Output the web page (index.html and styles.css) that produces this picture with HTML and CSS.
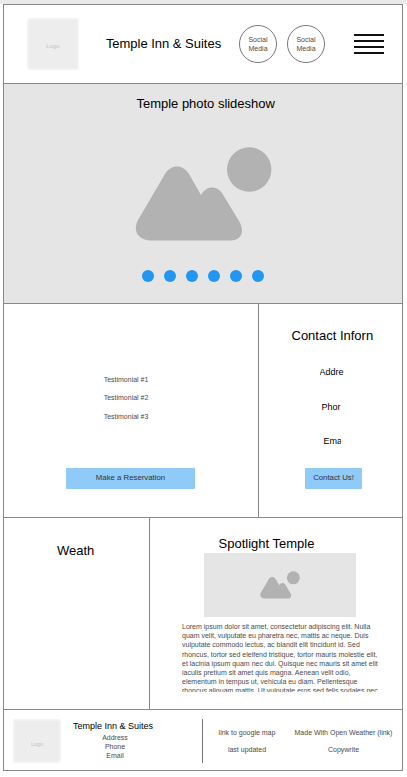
FILE: index.html
```html
<!DOCTYPE html>
<html lang="en">
<head>
<meta charset="utf-8">
<title>Temple Inn &amp; Suites</title>
<link rel="stylesheet" href="styles.css">
</head>
<body>
<svg class="defs" aria-hidden="true">
  <symbol id="photo" viewBox="0 0 137 94">
    <circle cx="114.200" cy="22.500" r="22.200"/>
    <path d="M30 27 C36 17 48 17 54 27 L66 48 C71 39 81 38 87 46 L104 74 C110 84 107 93 96 93.500 H16 C4 93 -3 85 3 73 Z"/>
  </symbol>
</svg>
<div class="page">
  <header class="header">
    <div class="logo">Logo</div>
    <h1 class="title brand">Temple Inn &amp; Suites</h1>
    <a class="social">Social<br>Media</a>
    <a class="social">Social<br>Media</a>
    <div class="menu"><i></i><i></i><i></i><i></i></div>
  </header>
  <section class="hero">
    <h2 class="title">Temple photo slideshow</h2>
    <svg class="hero-photo"><use href="#photo"/></svg>
    <div class="dots"><i></i><i></i><i></i><i></i><i></i><i></i></div>
  </section>
  <div class="row middle">
    <section class="testimonials">
      <p>Testimonial #1</p>
      <p>Testimonial #2</p>
      <p>Testimonial #3</p>
      <a class="button reserve">Make a Reservation</a>
    </section>
    <section class="contact">
      <h2 class="title contact-title">Contact Inforn</h2>
      <p class="address">Addre</p>
      <p class="phone">Phor</p>
      <p class="email">Ema</p>
      <a class="button contact-button">Contact Us!</a>
    </section>
  </div>
  <div class="row lower">
    <section class="weather"><h2 class="title">Weath</h2></section>
    <section class="spotlight">
      <h2 class="title">Spotlight Temple</h2>
      <div class="spot-image"><svg class="spot-photo"><use href="#photo"/></svg></div>
      <p class="lorem">Lorem ipsum dolor sit amet, consectetur adipiscing elit. Nulla<br>quam velit, vulputate eu pharetra nec, mattis ac neque. Duis<br>vulputate commodo lectus, ac blandit elit tincidunt id. Sed<br>rhoncus, tortor sed eleifend tristique, tortor mauris molestie elit,<br>et lacinia ipsum quam nec dui. Quisque nec mauris sit amet elit<br>iaculis pretium sit amet quis magna. Aenean velit odio,<br>elementum in tempus ut, vehicula eu diam. Pellentesque<br>rhoncus aliquam mattis. Ut vulputate eros sed felis sodales nec</p>
    </section>
  </div>
  <footer class="footer">
    <div class="logo logo-small">Logo</div>
    <div class="info">
      <h3>Temple Inn &amp; Suites</h3>
      <p>Address</p><p>Phone</p><p>Email</p>
    </div>
    <div class="divider"></div>
    <div class="links map"><p>link to google map</p><p>last updated</p></div>
    <div class="links credits"><p>Made With Open Weather (link)</p><p>Copywrite</p></div>
  </footer>
</div>
</body>
</html>
```
FILE: styles.css
```css
* { box-sizing: border-box; margin: 0; padding: 0; }
body {
  background: #fff;
  border-top: 4px solid #eaeaea;
  font: 7px/9.2px "Liberation Sans", Arial, sans-serif;
  color: #4a4a4a;
  height: 777px;
  overflow: hidden;
}
.defs { display: none; }
p, h1, h2, h3, a { white-space: nowrap; }
.page {
  width: 400px;
  height: 767px;
  margin-left: 3px;
  border: 1px solid #888;
  display: grid;
  grid-template-rows: 78px 220px 214px 192px 61px;
}
.title { font-size: 13px; line-height: 16px; font-weight: 400; color: #000; }

.header { display: flex; align-items: flex-start; }
.logo {
  width: 52px;
  height: 52px;
  margin: 13px 0 0 23px;
  background: #ededed;
  border: 2px solid #f3f3f3;
  border-radius: 3px;
  color: #c0c5c8;
  font-size: 6px;
  line-height: 53px;
  text-align: center;
}
.brand { width: 116px; margin: 31px 0 0 26.500px; text-align: center; letter-spacing: -0.02px; }
.social {
  width: 38px;
  height: 38px;
  margin: 20px 0 0 17.500px;
  padding-top: 9px;
  border: 1px solid #777;
  border-radius: 50%;
  text-align: center;
}
.social + .social { margin-left: 10px; }
.menu { width: 30px; margin: 29px 0 0 29px; display: grid; gap: 4.300px; }
.menu i { height: 1.700px; background: #111; }

.hero {
  background: #e5e5e5;
  border-top: 1px solid #888;
  display: flex;
  flex-direction: column;
}
.hero .title { margin: 12px 0 0 132.500px; letter-spacing: -0.02px; }
.hero-photo { width: 137px; height: 94px; margin: 35px 0 0 130.500px; fill: #b2b2b2; }
.dots { display: flex; gap: 10px; margin: 29px 0 0 138px; }
.dots i { width: 12px; height: 12px; border-radius: 50%; background: #2196f3; }

.row { display: grid; border-top: 1px solid #888; }
.middle { grid-template-columns: 254px 144px; }
.lower { grid-template-columns: 145px 253px; }
.testimonials { padding-top: 71px; }
.testimonials p { width: 47px; margin-left: 98.500px; height: 18.300px; text-align: center; }
.button {
  display: block;
  height: 21px;
  background: #90caf9;
  border-radius: 1px;
  font-size: 7.800px;
  line-height: 19px;
  color: #333;
  text-align: center;
}
.reserve { width: 129px; margin: 38.100px 0 0 62px; }
.contact { border-left: 1px solid #888; }
.contact-title { margin: 24px 0 0 32.500px; }
.contact p { font-size: 9px; line-height: 12px; color: #000; overflow: hidden; }
.contact .address { width: 24px; margin: 22px 0 0 60.500px; }
.contact .phone { width: 20px; margin: 23px 0 0 62.500px; }
.contact .email { width: 17px; margin: 22px 0 0 64.500px; }
.contact-button { width: 57px; margin: 21px 0 0 46px; }

.weather .title { width: 37px; margin: 25px 0 0 53px; }
.spotlight { border-left: 1px solid #888; }
.spotlight .title { margin: 18px 0 0 68.500px; }
.spot-image {
  width: 152px;
  height: 64px;
  margin: 1px 0 0 54px;
  padding: 18px 0 0 56px;
  background: #e5e5e5;
}
.spot-photo { display: block; width: 40px; height: 28px; fill: #b2b2b2; }
.lorem { width: 205px; height: 70px; margin: 5px 0 0 32px; overflow: hidden; }

.footer { border-top: 1px solid #888; display: flex; align-items: flex-start; }
.logo-small { width: 48px; height: 44px; margin: 9px 0 0 9px; font-size: 5.500px; line-height: 46px; }
.info { width: 82px; margin: 10px 0 0 11px; text-align: center; }
.info p { padding-left: 4px; }
.info h3 { font-size: 9px; line-height: 13px; font-weight: 400; color: #000; }
.divider { width: 1px; height: 44px; margin: 9px 0 0 48px; background: #777; }
.links { margin-top: 18px; text-align: center; }
.links p + p { margin-top: 8px; }
.map { width: 58px; margin-left: 15px; }
.credits { width: 100px; margin-left: 17.500px; }
```
